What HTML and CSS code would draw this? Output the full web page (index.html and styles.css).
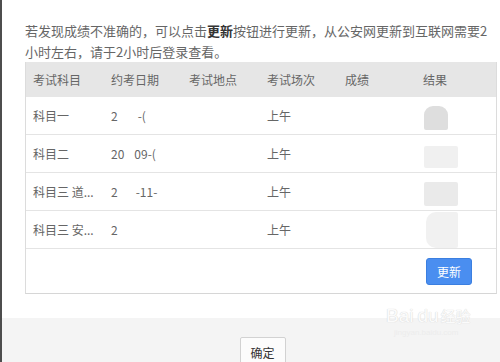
FILE: index.html
```html
<!DOCTYPE html>
<html lang="zh-CN">
<head>
<meta charset="utf-8">
<link rel="stylesheet" href="styles.css">
</head>
<body>
<div class="page">
  <div class="content">
    <p class="notice">若发现成绩不准确的，可以点击<b>更新</b>按钮进行更新，从公安网更新到互联网需要2<br>小时左右，请于2小时后登录查看。</p>
    <div class="grid">
      <div class="row head">
        <div class="cell">考试科目</div><div class="cell">约考日期</div><div class="cell">考试地点</div><div class="cell">考试场次</div><div class="cell">成绩</div><div class="cell">结果</div>
      </div>
      <div class="row">
        <div class="cell">科目一</div><div class="cell">2<span class="gap g1"></span>-(</div><div class="cell"></div><div class="cell">上午</div><div class="cell"></div><div class="cell"></div>
      </div>
      <div class="row">
        <div class="cell">科目二</div><div class="cell">20<span class="gap g2"></span>09-(</div><div class="cell"></div><div class="cell">上午</div><div class="cell"></div><div class="cell"></div>
      </div>
      <div class="row">
        <div class="cell">科目三 道...</div><div class="cell">2<span class="gap g3"></span>-11-</div><div class="cell"></div><div class="cell">上午</div><div class="cell"></div><div class="cell"></div>
      </div>
      <div class="row">
        <div class="cell">科目三 安...</div><div class="cell">2</div><div class="cell"></div><div class="cell">上午</div><div class="cell"></div><div class="cell"></div>
      </div>
      <div class="actions"><button class="btn-update">更新</button></div>
      <div class="mask m1"></div>
      <div class="mask m2"></div>
      <div class="mask m3"></div>
      <div class="mask m4"></div>
    </div>
  </div>
  <div class="footer">
    <button class="btn-ok">确定</button>
    <div class="watermark">Bai<span class="du">du</span><span class="jy">经验</span><div class="url">jingyan.baidu.com</div></div>
  </div>
</div>
</body>
</html>
```
FILE: styles.css
```css
html, body {
  margin: 0;
  padding: 0;
  background: #fff;
}
body {
  font-family: "Noto Sans CJK SC", "Noto Sans", sans-serif;
  color: #666;
  width: 500px;
  height: 362px;
  overflow: hidden;
}
.page {
  border-left: 2px solid #4d4d4d;
  height: 362px;
  display: flex;
  flex-direction: column;
  box-sizing: border-box;
}
.content {
  padding: 20px 3px 0 23px;
  height: 318px;
  flex: none;
  box-sizing: border-box;
}
.notice {
  margin: 0;
  font-size: 13px;
  line-height: 21px;
  color: #666;
  height: 42px;
  white-space: nowrap;
}
.notice b {
  color: #333;
  font-weight: bold;
}
.grid {
  position: relative;
  border-left: 1px solid #dcdcdc;
  border-right: 1px solid #dcdcdc;
  border-bottom: 1px solid #d6d6d6;
  width: 472px;
  box-sizing: border-box;
}
.row {
  display: grid;
  grid-template-columns: 78px 78px 78px 78px 78px 1fr;
  height: 38px;
  align-items: center;
  border-bottom: 1px solid #e4e4e4;
  box-sizing: border-box;
  font-size: 12px;
  color: #666;
}
.row.head {
  height: 35px;
  background: #e6e6e6;
  border-bottom: none;
}
.cell {
  padding-left: 7px;
  white-space: nowrap;
}
.gap { display: inline-block; }
.g1 { width: 20px; }
.g2 { width: 10px; }
.g3 { width: 18px; }
.actions {
  height: 44px;
  display: flex;
  align-items: center;
  justify-content: flex-end;
  padding-right: 24px;
}
.btn-update {
  width: 46px;
  height: 27px;
  border: 1px solid #3b7fe0;
  border-radius: 3px;
  background: #4a8ef0;
  color: #fff;
  font-family: "Noto Sans CJK SC", sans-serif;
  font-size: 12px;
  padding: 0;
  margin-top: 1px;
}
.mask {
  position: absolute;
}
.m1 { left: 398px; top: 44px; width: 24px; height: 24px; background: #dedede; border-radius: 9px 9px 2px 2px; }
.m2 { left: 398px; top: 84px; width: 34px; height: 22px; background: #f0f0f0; border-radius: 2px; }
.m3 { left: 398px; top: 120px; width: 34px; height: 24px; background: #eaeaea; border-radius: 2px; }
.m4 { left: 400px; top: 150px; width: 32px; height: 36px; background: #f1f1f1; border-radius: 10px 2px 2px 10px; }
.footer {
  position: relative;
  flex: 1;
  background: #f4f4f4;
  display: flex;
  justify-content: center;
  padding-top: 19px;
  box-sizing: border-box;
}
.btn-ok {
  width: 46px;
  height: 30px;
  border: 1px solid #d2d2d2;
  border-radius: 2px;
  background: #fcfcfc;
  color: #333;
  font-family: "Noto Sans CJK SC", sans-serif;
  font-size: 12px;
  padding: 0;
  margin-left: 23px;
  align-self: flex-start;
}
.watermark {
  position: absolute;
  left: 384px;
  top: -13px;
  font-family: "Liberation Sans", sans-serif;
  font-size: 19px;
  color: #fbfbfb;
  text-shadow: 0 0 1px #dadada, 0 0 1px #dadada;
  line-height: 22px;
}
.watermark .du {
  margin-left: 4px;
}
.watermark .jy {
  font-family: "Noto Sans CJK SC", sans-serif;
  font-size: 15px;
  margin-left: 2px;
}
.watermark .url {
  font-size: 8px;
  line-height: 12px;
  color: #ececec;
  text-shadow: none;
  margin-left: 8px;
}
```
